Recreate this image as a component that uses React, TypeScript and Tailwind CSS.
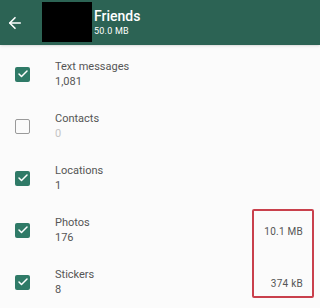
import { ArrowLeft, Check } from "lucide-react";

interface Item {
  label: string;
  count: string;
  checked: boolean;
}

const items: Item[] = [
  { label: "Text messages", count: "1,081", checked: true },
  { label: "Contacts", count: "0", checked: false },
  { label: "Locations", count: "1", checked: true },
  { label: "Photos", count: "176", checked: true },
  { label: "Stickers", count: "8", checked: true },
];

export default function App() {
  return (
    <div
      className="relative w-[320px] h-[308px] overflow-hidden bg-[#fbfbfb]"
      style={{ fontFamily: "Roboto, 'Noto Sans', sans-serif" }}
    >
      {/* Header */}
      <div className="flex items-center h-[45px] bg-[#2c6354] shadow-sm">
        <ArrowLeft size={18} strokeWidth={2.2} className="ml-[6px] text-white" />
        <div className="ml-[18px] mt-[-2px] w-[50px] h-[40px] bg-black" />
        <div className="ml-[2px] flex flex-col leading-none">
          <span className="text-[14px] font-medium text-white">Friends</span>
          <span className="mt-[4px] text-[9px] text-white tracking-wide">50.0 MB</span>
        </div>
      </div>

      {/* List */}
      <div className="flex flex-col pt-[3px]">
        {items.map((item) => (
          <div key={item.label} className="flex items-center h-[52px]">
            <div className="w-[55px] flex pl-[15px]">
              {item.checked ? (
                <div className="w-[15px] h-[15px] rounded-[2px] bg-[#2f7a67] flex items-center justify-center">
                  <Check size={12} strokeWidth={3} className="text-white" />
                </div>
              ) : (
                <div className="w-[15px] h-[15px] rounded-[2px] border-[1.5px] border-[#9a9a9a]" />
              )}
            </div>
            <div className="flex flex-col leading-none">
              <span className="text-[11px] text-[#555555]">{item.label}</span>
              <span
                className={
                  item.checked
                    ? "mt-[4px] text-[11px] text-[#555555]"
                    : "mt-[4px] text-[11px] text-[#c4c4c4]"
                }
              >
                {item.count}
              </span>
            </div>
          </div>
        ))}
      </div>

      {/* Highlight box over sizes */}
      <div className="absolute left-[252px] top-[209px] w-[62px] h-[89px] border-2 border-[#c9404c] rounded-[2px] flex flex-col items-end justify-between pr-[9px] pt-[13px] pb-[5px]">
        <span className="text-[10px] text-[#555555] tracking-wide">10.1 MB</span>
        <span className="text-[10px] text-[#555555] tracking-wide">374 kB</span>
      </div>
    </div>
  );
}
